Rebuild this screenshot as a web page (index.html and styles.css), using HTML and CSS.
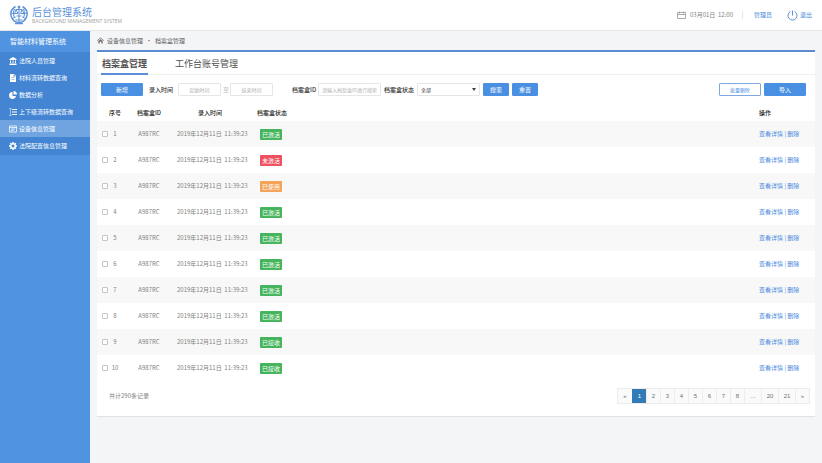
FILE: index.html
```html
<!DOCTYPE html>
<html lang="zh-CN">
<head>
    <meta charset="utf-8">
    <title>后台管理系统</title>
    <link rel="stylesheet" href="styles.css">
</head>
<body>
    <header class="header">
        <svg class="logo" viewBox="0 0 36 40" fill="none" stroke="#5b93d6" stroke-width="2">
            <path d="M11 3C3 8 0 16 3 24s9 11 15 11 12-3 15-11 0-16-8-21" stroke-width="3"/>
            <path d="M9 8c-3 6-3 13 1 18M27 8c3 6 3 13-1 18M3 16l6 2M33 16l-6 2M5 27l6-3M31 27l-6-3"/>
            <path d="M18 2v32M12 9h12M12 9l-3 8h7zM24 9l-3 8h7zM13 22h10M11 30h14"/>
            <circle cx="18" cy="4" r="2" fill="#5b93d6"/>
            <path d="M10 37h16" stroke-width="3"/>
        </svg>
        <div class="brand">
            <div class="brand-name">后台管理系统</div>
            <div class="brand-sub">BACKGROUND MANAGEMENT SYSTEM</div>
        </div>
        <div class="user">
            <svg class="calendar" viewBox="0 0 18 16" fill="none" stroke="#909090" stroke-width="1.5">
                <path d="M1 3h16v12H1zM1 7h16M5 1v4M13 1v4"/>
            </svg>
            <span class="clock">03月01日&nbsp; 12:00</span>
            <span class="divider"></span>
            <a href="#" class="admin">管理员</a>
            <a href="#" class="logout">
                <svg viewBox="0 0 22 22" fill="none" stroke="#5b8fd0" stroke-width="2">
                    <path d="M7 3a9 9 0 1 0 8 0M11 1v10"/>
                </svg>
                退出
            </a>
        </div>
    </header>

    <div class="container">
        <nav class="sidebar">
            <div class="sidebar-title">智能材料管理系统</div>
            <ul class="menu">
                <li><a href="#">
                    <svg viewBox="0 0 16 16" fill="#fff"><path d="M8 0l7 4v2H1V4zM2 7h2v5H2zM6 7h1v5H6zM9 7h1v5H9zM12 7h2v5h-2zM1 13h14v3H1z"/></svg>
                    法院人员管理</a></li>
                <li><a href="#">
                    <svg viewBox="0 0 16 16" fill="#fff"><path fill-rule="evenodd" d="M2 0h8l4 4v12H2zM5 7v1h6V7zM5 10v1h6v-1zM9 1v4h4z"/></svg>
                    材料流转数据查询</a></li>
                <li><a href="#">
                    <svg viewBox="0 0 16 16" fill="#fff"><path d="M7 2a7 7 0 1 0 7 8H7zM9 0v7h7a7 7 0 0 0-7-7z"/></svg>
                    数据分析</a></li>
                <li><a href="#">
                    <svg viewBox="0 0 16 16" fill="#fff"><path d="M0 1h5v1H3v12h2v1H0v-1h2V2H0zM6 2h10v2H6zM6 7h10v2H6zM6 12h10v2H6z"/></svg>
                    上下级流转数据查询</a></li>
                <li><a href="#" class="active">
                    <svg viewBox="0 0 16 16" fill="none" stroke="#fff" stroke-width="1.5"><path d="M1 2h14v12H1zM1 5h14M4 8h8M4 11h5"/></svg>
                    设备信息管理</a></li>
                <li><a href="#">
                    <svg viewBox="0 0 16 16" fill="none" stroke="#fff"><circle cx="8" cy="8" r="4.5" stroke-width="3"/><path d="M8 0v3M8 13v3M0 8h3M13 8h3M2.5 2.5l2 2M11.5 11.5l2 2M2.5 13.5l2-2M11.5 4.5l2-2" stroke-width="3"/></svg>
                    法院配置信息管理</a></li>
            </ul>
        </nav>

        <main class="main">
            <div class="breadcrumb">
                <svg viewBox="0 0 16 16" fill="#707070"><path d="M8 1l8 7-1 1-7-6-7 6-1-1zM3 9l5-4 5 4v6h-3v-4H6v4H3z"/></svg>
                <a href="#">设备信息管理</a>
                <span class="sep">·</span>
                <span>档案盒管理</span>
            </div>

            <section class="panel">
                <div class="tabs">
                    <a href="#" class="tab active">档案盒管理</a>
                    <a href="#" class="tab">工作台账号管理</a>
                </div>

                <form class="filters">
                    <button type="button" class="btn btn-wide">新增</button>
                    <label for="start">录入时间</label>
                    <input type="text" id="start" class="date" placeholder="起始时间">
                    <label for="end" class="to">至</label>
                    <input type="text" id="end" class="date" placeholder="结束时间">
                    <label for="box-id" class="box-label">档案盒ID</label>
                    <input type="text" id="box-id" class="box-id" placeholder="请输入档案盒ID进行搜索">
                    <label for="status" class="status-label">档案盒状态</label>
                    <span class="select-wrap">
                        <select id="status">
                            <option>全部</option>
                            <option>已激活</option>
                            <option>未激活</option>
                            <option>已使用</option>
                            <option>已接收</option>
                        </select>
                    </span>
                    <button type="submit" class="btn">搜索</button>
                    <button type="reset" class="btn">重置</button>
                    <button type="button" class="btn btn-wide btn-outline">批量删除</button>
                    <button type="button" class="btn btn-wide">导入</button>
                </form>

                <table>
                    <thead>
                        <tr>
                            <th class="check"></th>
                            <th class="no">序号</th>
                            <th class="id">档案盒ID</th>
                            <th class="time">录入时间</th>
                            <th class="status">档案盒状态</th>
                            <th class="actions">操作</th>
                        </tr>
                    </thead>
                    <tbody></tbody>
                </table>

                <div class="footer">
                    <span>共计290条记录</span>
                    <div class="pagination">
                        <a href="#">«</a>
                        <a href="#" class="current">1</a>
                        <a href="#">2</a>
                        <a href="#">3</a>
                        <a href="#">4</a>
                        <a href="#">5</a>
                        <a href="#">6</a>
                        <a href="#">7</a>
                        <a href="#">8</a>
                        <span class="long">...</span>
                        <a href="#" class="long">20</a>
                        <a href="#" class="long">21</a>
                        <a href="#">»</a>
                    </div>
                </div>
            </section>
        </main>
    </div>

    <script src="script.js"></script>
</body>
</html>
```

FILE: styles.css
```css
* { box-sizing: border-box; }
body {
    margin: 0;
    min-height: 100vh;
    display: flex;
    flex-direction: column;
    font-family: "Noto Sans CJK SC", sans-serif;
    font-size: 6px;
    line-height: 10px;
    color: #808080;
    background: #f4f5f6;
}
a { color: #4a8bdc; text-decoration: none; }
svg { display: block; flex: none; }

.header {
    display: flex;
    align-items: center;
    height: 31px;
    padding: 0 10px;
    background: white;
    border-bottom: 1px solid #e6e6e8;
}
.logo { width: 18px; height: 20px; }
.brand { margin-left: 4px; }
.brand-name {
    font-size: 10px;
    line-height: 12px;
    color: #5b93d6;
}
.brand-sub {
    font-family: "Open Sans", sans-serif;
    font-size: 5px;
    line-height: 6px;
    color: #a0a0a0;
}
.user {
    display: flex;
    align-items: center;
    margin-left: auto;
}
.calendar { width: 9px; height: 8px; margin-right: 4px; }
.divider {
    width: 1px;
    height: 8px;
    margin: 0 11px 0 9px;
    background: #e8e8e8;
}
.logout {
    display: flex;
    align-items: center;
    gap: 2px;
    margin-left: 15px;
}
.logout svg { width: 11px; height: 11px; }

.container { display: flex; flex: 1; }
.sidebar { width: 90px; flex: none; background: #5093e1; }
.sidebar-title {
    padding: 0 10px;
    font-size: 7px;
    line-height: 21px;
    color: white;
}
.menu {
    margin: 0;
    padding: 0 0 1px;
    list-style: none;
    background: #4385d2;
}
.menu a {
    display: flex;
    align-items: center;
    gap: 2px;
    height: 17px;
    padding-left: 9px;
    color: white;
    white-space: nowrap;
}
.menu svg { width: 8px; height: 8px; }
.menu .active { background: #70a4e0; }

.main { flex: 1; min-width: 0; padding: 0 7px; }
.breadcrumb {
    display: flex;
    align-items: center;
    height: 19px;
    color: #606060;
}
.breadcrumb svg { width: 7px; height: 7px; margin-right: 3px; }
.breadcrumb a { color: #606060; }
.sep { margin: 0 3px; }

.panel {
    background: white;
    border-top: 2px solid #5b8cd2;
    border-bottom: 1px solid #e2e2e2;
}
.tabs {
    display: flex;
    gap: 26px;
    padding: 0 4px;
    border-bottom: 1px solid #efefef;
}
.tab {
    padding: 5px 1px 3px;
    font-size: 9px;
    line-height: 13px;
    color: #505050;
}
.tab.active {
    margin-bottom: -1px;
    font-weight: bold;
    border-bottom: 2px solid #5b8fd6;
}

.filters {
    display: flex;
    align-items: center;
    padding: 8px 9px 8px 4px;
}
.filters label { color: #303030; font-weight: 500; white-space: nowrap; }
.btn {
    width: 26px;
    height: 13px;
    padding: 0;
    margin-left: 3px;
    border: 1px solid #4a90e2;
    border-radius: 1px;
    font-family: inherit;
    font-size: 6px;
    line-height: 10px;
    color: white;
    background: #4a90e2;
    cursor: pointer;
}
.btn-wide { width: 42px; }
.btn-wide:first-child { margin: 0 6px 0 0; }
.btn-outline {
    margin-left: auto;
    border-color: #7fa9de;
    font-size: 5px;
    color: #4a90e2;
    background: white;
}
.filters input, .filters select {
    height: 13px;
    padding: 0 3px;
    border: 1px solid #e6e6e6;
    border-radius: 1px;
    font-family: inherit;
    font-size: 5px;
    color: #404040;
    background: white;
}
.filters input::placeholder { color: #b0b0b0; }
.filters .date { width: 43px; margin-left: 5px; text-align: center; }
.filters .to { margin-left: 2px; color: #c0c0c0; font-weight: normal; }
.filters .to + .date { margin-left: 1px; }
.filters .box-label { margin-left: 19px; }
.filters .box-id { width: 63px; margin-left: 2px; }
.filters .status-label { margin-left: 3px; }
.select-wrap { position: relative; display: flex; margin-left: 3px; }
.select-wrap select { width: 63px; appearance: none; }
.select-wrap::after {
    content: "";
    position: absolute;
    right: 4px;
    top: 5px;
    border: 2px solid transparent;
    border-top: 3px solid #404040;
    border-bottom: 0;
    pointer-events: none;
}

table { width: 100%; border-collapse: collapse; table-layout: fixed; }
th, td { height: 26px; padding: 0; text-align: center; white-space: nowrap; }
th { height: 17px; font-weight: 500; color: #202020; }
tbody tr:nth-child(odd) { background: #f8f8f8; }
.check { width: 12px; }
.no { width: 12px; }
.id { width: 56px; }
.time { width: 66px; }
.status { padding-left: 14px; text-align: left; }
td.status { padding-left: 17px; }
.actions { width: 56px; text-align: left; }
td.check { padding-left: 5px; }
td.check input {
    display: block;
    appearance: none;
    width: 6px;
    height: 6px;
    margin: 0;
    border: 1px solid #c4c4c4;
    border-radius: 1px;
    background: white;
}
.badge {
    display: inline-block;
    padding: 0 2px;
    border-radius: 1px;
    line-height: 11px;
    color: white;
}
.green { background: #45b45c; }
.red { background: #ee5060; }
.orange { background: #f4a458; }

.footer {
    display: flex;
    align-items: center;
    justify-content: space-between;
    padding: 7px 5px 12px 12px;
}
.pagination {
    display: flex;
    border: 1px solid #ececec;
    font-family: "Liberation Sans", sans-serif;
    line-height: 14px;
    text-align: center;
    background: #fafafa;
}
.pagination a, .pagination span {
    width: 14px;
    border-left: 1px solid #ececec;
    color: #707070;
}
.pagination .long { width: 17px; }
.pagination a:first-child { border-left: 0; }
.pagination .current { color: white; background: #337ab7; border-color: #337ab7; }
```

FILE: script.js
```js
const states = [
    ['已激活', 'green'],
    ['未激活', 'red'],
    ['已使用', 'orange'],
    ['已激活', 'green'],
    ['已激活', 'green'],
    ['已激活', 'green'],
    ['已激活', 'green'],
    ['已激活', 'green'],
    ['已接收', 'green'],
    ['已接收', 'green']
];

document.querySelector('tbody').innerHTML = states.map(([text, color], i) => `
    <tr>
        <td class="check"><input type="checkbox" aria-label="选择 ${i + 1}"></td>
        <td class="no">${i + 1}</td>
        <td class="id">A987RC</td>
        <td class="time">2019年12月11日&nbsp; 11:39:23</td>
        <td class="status"><span class="badge ${color}">${text}</span></td>
        <td class="actions"><a href="#">查看详情</a> <a href="#">| 删除</a></td>
    </tr>
`).join('');
```
